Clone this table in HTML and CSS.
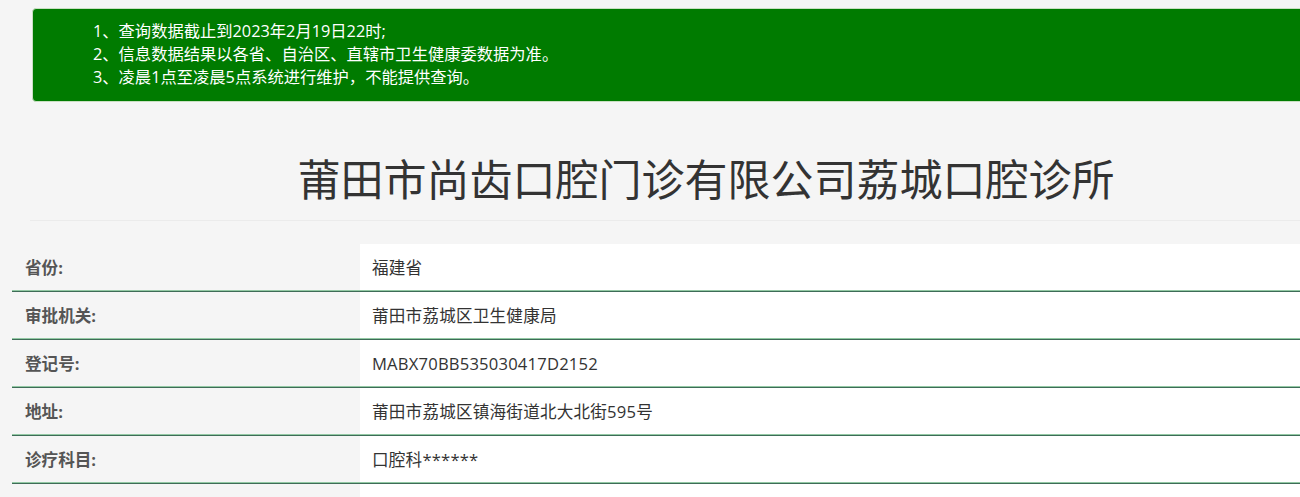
FILE: index.html
```html
<!DOCTYPE html>
<html lang="zh-CN">
<head>
<meta charset="utf-8">
<title>莆田市尚齿口腔门诊有限公司荔城口腔诊所</title>
<link rel="stylesheet" href="styles.css">
</head>
<body>
<div class="page">
  <div class="notice">
    <ol class="notice-list">
      <li>1、查询数据截止到2023年2月19日22时;</li>
      <li>2、信息数据结果以各省、自治区、直辖市卫生健康委数据为准。</li>
      <li>3、凌晨1点至凌晨5点系统进行维护，不能提供查询。</li>
    </ol>
  </div>
  <h1 class="title">莆田市尚齿口腔门诊有限公司荔城口腔诊所</h1>
  <hr class="divider">
  <table class="info">
    <tbody>
      <tr><th>省份:</th><td>福建省</td></tr>
      <tr><th>审批机关:</th><td>莆田市荔城区卫生健康局</td></tr>
      <tr><th>登记号:</th><td>MABX70BB535030417D2152</td></tr>
      <tr><th>地址:</th><td>莆田市荔城区镇海街道北大北街595号</td></tr>
      <tr><th>诊疗科目:</th><td>口腔科******</td></tr>
      <tr><th></th><td></td></tr>
    </tbody>
  </table>
</div>
</body>
</html>
```

FILE: styles.css
```css
html, body {
  margin: 0;
  padding: 0;
  overflow: hidden;
  background: #f5f5f5;
}
body {
  font-family: "Open Sans", "Noto Sans CJK SC", sans-serif;
  font-size: 16px;
  color: #333;
}
.page {
  width: 1388px;
  margin-left: 12px;
  padding-top: 8px;
}
.notice {
  margin: 0 20px;
  background: #007b00;
  border: 1px solid #c9dfc2;
  border-radius: 4px;
  padding: 11px 15px 12px 45px;
  color: #fff;
  font-size: 16.3px;
}
.notice-list {
  list-style: none;
  margin: 0;
  padding: 0 0 0 15px;
  line-height: 22.86px;
}
.title {
  margin: 52px 0 0;
  font-family: "Noto Sans CJK SC", sans-serif;
  font-size: 43px;
  font-weight: normal;
  line-height: 46px;
  text-align: center;
  color: #333;
}
.divider {
  margin: 20px 0 0 18px;
  border: 0;
  border-top: 1px solid #ebebeb;
  height: 0;
}
.info {
  margin-top: 23px;
  width: 100%;
  border-collapse: collapse;
  font-size: 16.6px;
}
.info th,
.info td {
  height: 47px;
  padding: 0 12px;
  text-align: left;
  vertical-align: middle;
  border-bottom: 1px solid #3e6c57;
  box-shadow: inset 0 -1px 0 #93c9a4;
}
.info th {
  width: 323px;
  padding-left: 13px;
  font-weight: bold;
  color: #555;
  background: transparent;
}
.info td {
  background: #fff;
  color: #333;
  letter-spacing: 0.2px;
}
```
